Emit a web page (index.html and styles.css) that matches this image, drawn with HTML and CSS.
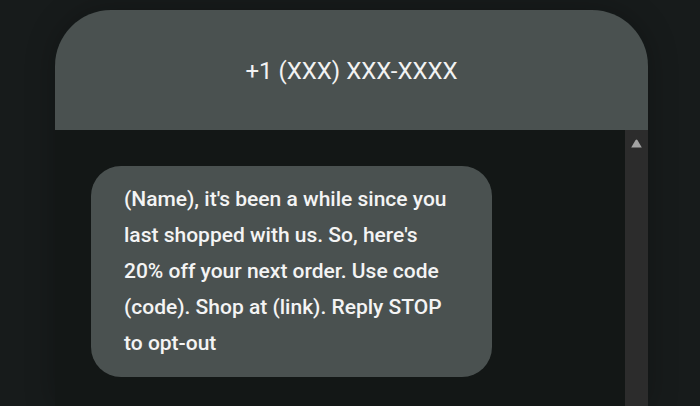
FILE: index.html
```html
<!DOCTYPE html>
<html>
<head>
<meta charset="utf-8">
<link rel="stylesheet" href="styles.css">
</head>
<body>
<div class="phone">
  <div class="header">+1 (XXX) XXX-XXXX</div>
  <div class="screen">
    <div class="messages">
      <div class="bubble">(Name), it's been a while since you last shopped with us. So, here's 20% off your next order. Use code (code). Shop at (link). Reply STOP to opt-out</div>
    </div>
    <div class="scrollbar">
      <svg class="arrow" width="11" height="9" viewBox="0 0 11 9"><path d="M4.6 1 Q5.5 0 6.4 1 L10.8 8.5 L0.2 8.5 Z" fill="#a3a3a3"/></svg>
    </div>
  </div>
</div>
</body>
</html>
```
FILE: styles.css
```css
html, body {
  margin: 0;
  padding: 0;
  background: #171b1b;
  height: 406px;
  overflow: hidden;
}
.phone {
  margin: 10px 0 0 55px;
  width: 593px;
  font-family: Roboto, "Noto Sans", sans-serif;
  box-shadow: 0 0 30px rgba(0,0,0,0.25);
  border-radius: 56px 56px 0 0;
}
.header {
  height: 120px;
  background: #4a5150;
  border-radius: 56px 56px 0 0;
  color: #f2f2f2;
  font-size: 24px;
  display: flex;
  align-items: center;
  justify-content: center;
  padding-top: 1px;
  box-sizing: border-box;
}
.screen {
  display: flex;
  height: 276px;
  background: #131716;
}
.messages {
  flex: 1;
  padding: 36px 0 0 36px;
}
.bubble {
  width: 335px;
  background: #4a5150;
  border-radius: 30px;
  padding: 15px 33px 16px;
  color: #f4f4f4;
  font-size: 21px;
  font-weight: 500;
  line-height: 36px;
}
.scrollbar {
  width: 23px;
  background: #2c2c2c;
  display: flex;
  justify-content: center;
  padding-top: 9px;
  box-sizing: border-box;
}
.arrow {
  display: block;
}
```
